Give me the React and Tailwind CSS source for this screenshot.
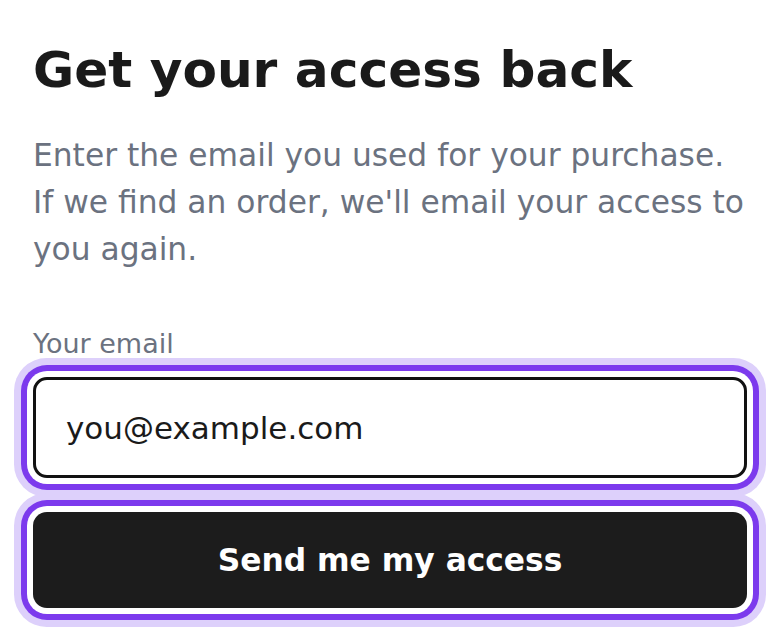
import { useState } from "react";

export default function App() {
    const [email, setEmail] = useState("you@example.com");

    return (
        <div className="min-h-screen bg-white font-['DejaVu_Sans',sans-serif]">
            <div className="px-[33px] pt-[40px]">
                <h1 className="text-[50.2px] leading-[60px] font-bold text-[#1a1a1a]">
                    Get your access back
                </h1>
                <p className="mt-[32px] text-[31.3px] leading-[47px] text-[#6b7280]">
                    Enter the email you used for your purchase. If we find an
                    order, we'll email your access to you again.
                </p>

                <form
                    className="mt-[51px] flex flex-col"
                    onSubmit={(e) => e.preventDefault()}
                >
                    <label
                        htmlFor="email"
                        className="text-[27px] leading-[39px] text-[#6b7280]"
                    >
                        Your email
                    </label>
                    <input
                        id="email"
                        type="email"
                        value={email}
                        onChange={(e) => setEmail(e.target.value)}
                        className="mt-[14px] h-[101px] w-full rounded-[14px] border-[3px] border-[#111111] bg-white pl-[30px] text-[31px] text-[#1a1a1a] outline-none ring-[6px] ring-[#7c3aed] ring-offset-[6px] ring-offset-white shadow-[0_0_0_19px_#ddd0fb]"
                    />
                    <button
                        type="submit"
                        className="mt-[34px] h-[96px] w-full rounded-[14px] bg-[#1c1c1c] text-[31.3px] font-bold text-white ring-[6px] ring-[#7c3aed] ring-offset-[6px] ring-offset-white shadow-[0_0_0_19px_#ddd0fb]"
                    >
                        Send me my access
                    </button>
                </form>
            </div>
        </div>
    );
}
